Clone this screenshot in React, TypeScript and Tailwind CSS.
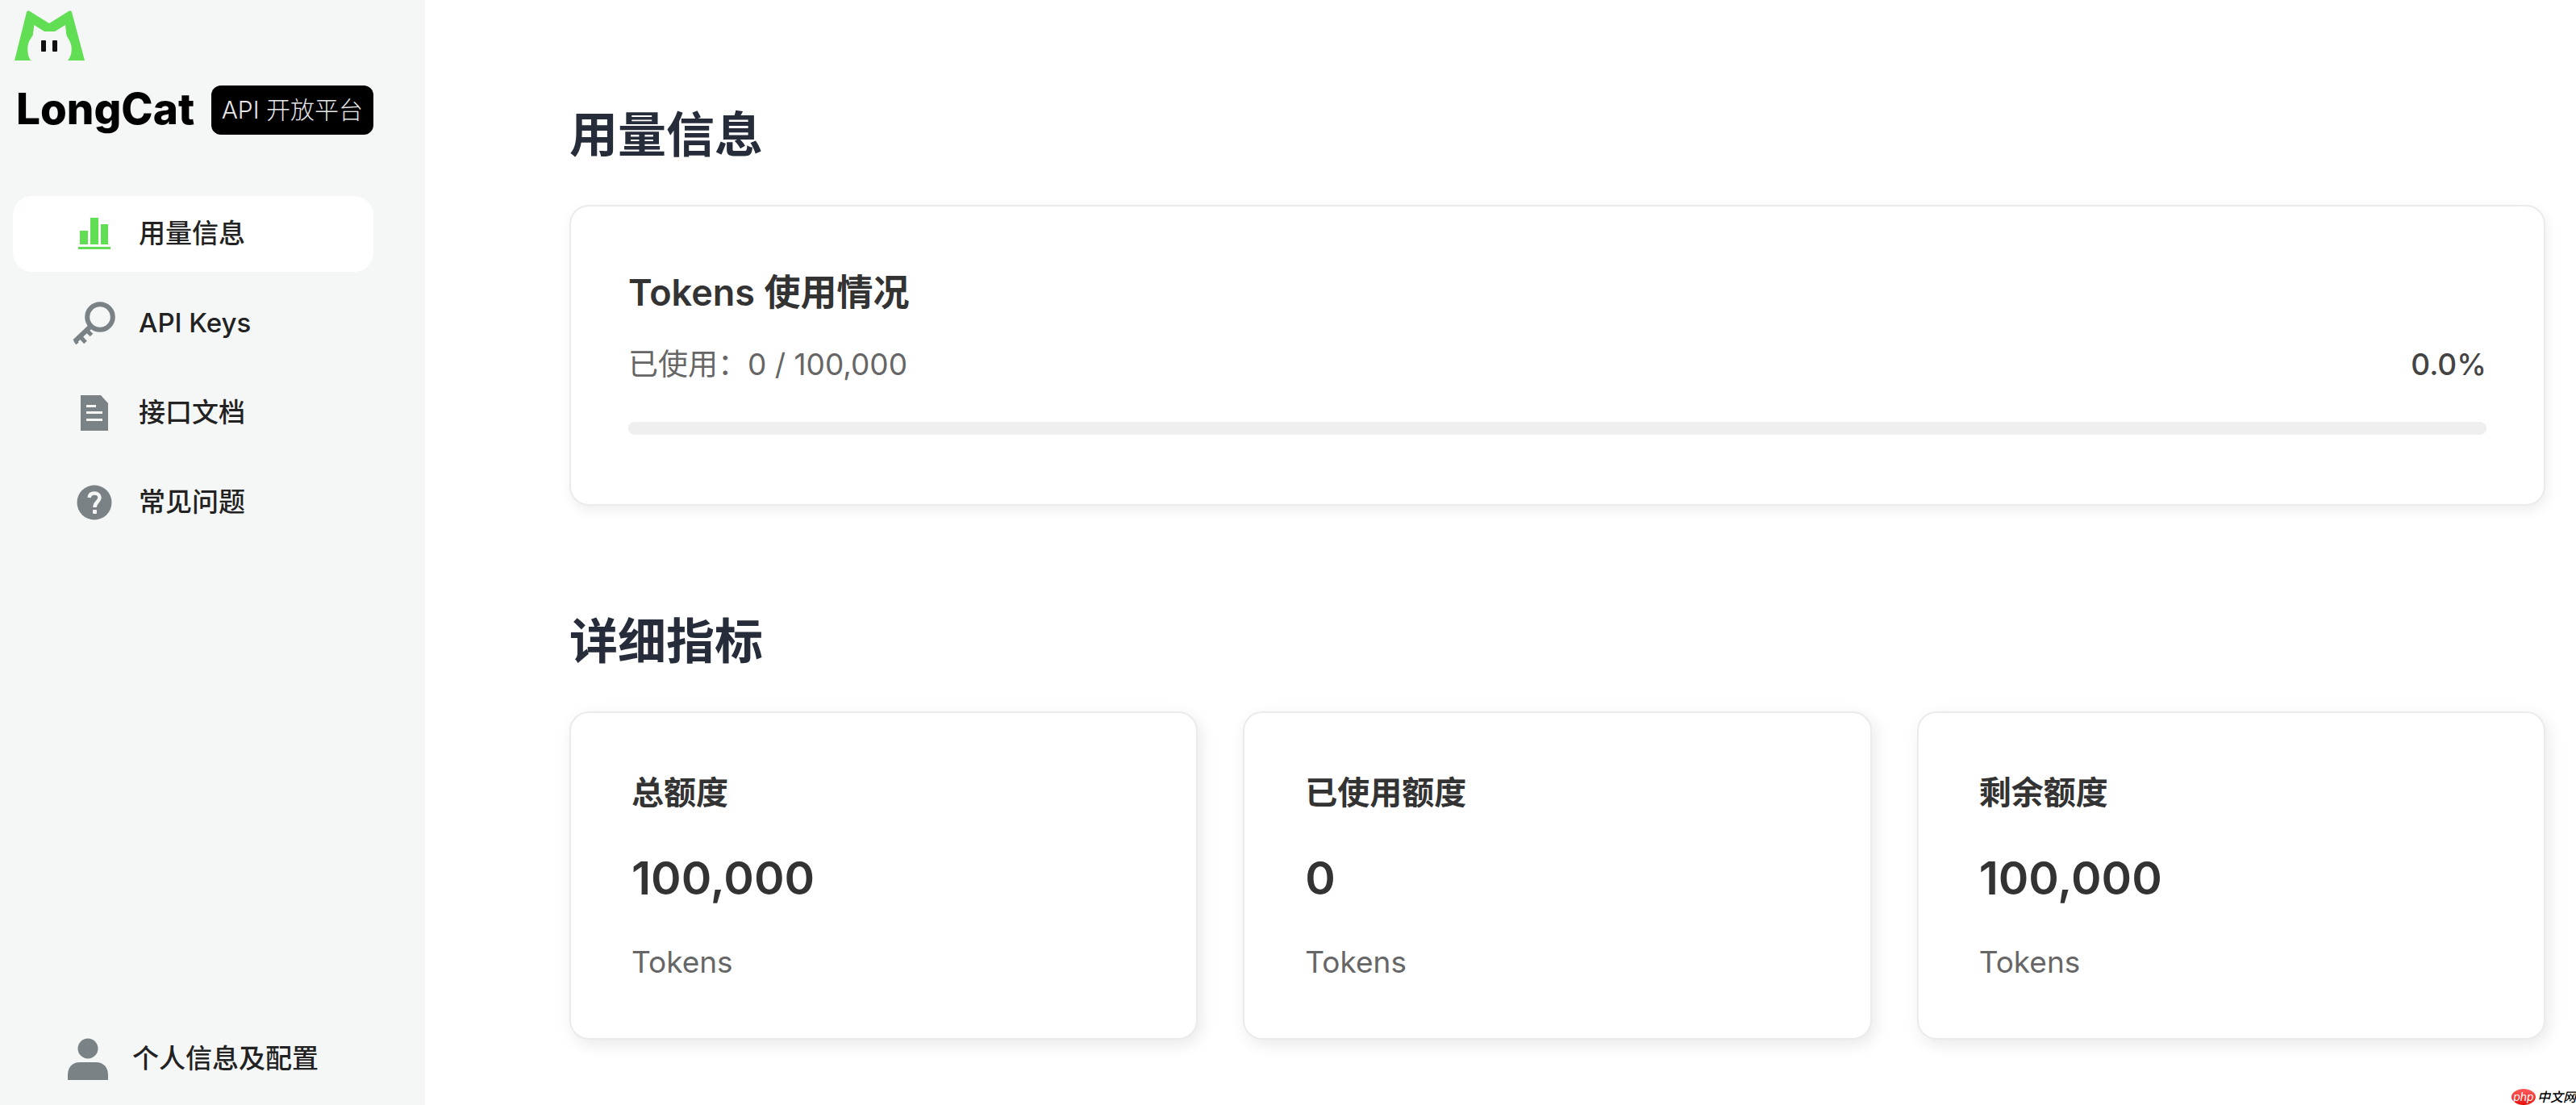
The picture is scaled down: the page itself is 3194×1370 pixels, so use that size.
import React from 'react';

interface NavItem {
  id: string;
  label: string;
  icon: React.ReactNode;
  active?: boolean;
}

interface Metric {
  id: string;
  label: string;
  value: number;
}

const UsageIcon = () => (
  <svg width="40" height="42" viewBox="0 0 40 42" fill="currentColor" aria-hidden="true">
    <rect x="2" y="17" width="10" height="17" />
    <rect x="15" y="1" width="10" height="33" />
    <rect x="28" y="9" width="9" height="25" />
    <rect x="0" y="37" width="40" height="3" />
  </svg>
);

const KeyIcon = () => (
  <svg width="54" height="54" viewBox="0 0 54 54" fill="none" stroke="currentColor" aria-hidden="true">
    <circle cx="34" cy="19" r="15.8" strokeWidth="6" />
    <path d="M22 31 L2.500 49.500" strokeWidth="6" />
    <path d="M17 35 L23.500 41.500 M10 44 L16 50.500" strokeWidth="5" />
    <path d="M3 48 L6 52" strokeWidth="4" />
  </svg>
);

const DocIcon = () => (
  <svg width="36" height="44" viewBox="0 0 36 44" aria-hidden="true">
    <path d="M1 0 H26 L35 10 V44 H1 Z" fill="currentColor" />
    <g fill="#f5f7f7">
      <rect x="8" y="12" width="12" height="3" />
      <rect x="8" y="20" width="20" height="3" />
      <rect x="8" y="29" width="20" height="3" />
    </g>
  </svg>
);

const HelpIcon = () => (
  <svg width="44" height="44" viewBox="0 0 44 44" aria-hidden="true">
    <circle cx="22" cy="22" r="21.5" fill="currentColor" />
    <path
      d="M15.500 16 C16 12 19 10.500 22 10.500 C26 10.500 28.500 13 28.500 16 C28.500 21 22.500 21.500 22.500 28"
      fill="none"
      stroke="#f5f7f7"
      strokeWidth="4.5"
    />
    <rect x="20" y="31" width="5" height="5" rx="1" fill="#f5f7f7" />
  </svg>
);

const UserIcon = () => (
  <svg width="52" height="52" viewBox="0 0 52 52" fill="currentColor" aria-hidden="true">
    <circle cx="26" cy="13" r="12.5" />
    <path d="M1 52 V46 C1 36 7 30 16 30 H36 C45 30 51 36 51 46 V52 Z" />
  </svg>
);

const Logo = () => (
  <svg width="88" height="64" viewBox="0 0 88 64" role="img" aria-label="LongCat">
    <path
      d="M0 63 L15 3 Q16 0 19 2 L43 17 L67 2 Q70 0 71 3 L87 63 H66 C71 57 71 51 70.500 45 C69 38 66 36 64.300 31 L63 19 L50 27 H37 L24.300 19 L22.700 32 C19 37 16.500 41 16.300 48 C16.300 54 17 59 20.300 63 Z"
      fill="#62de54"
    />
    <rect x="33" y="38" width="6" height="14" rx="1" fill="#111" />
    <rect x="47" y="38" width="6" height="14" rx="1" fill="#111" />
  </svg>
);

const navItems: NavItem[] = [
  { id: 'usage', label: '用量信息', icon: <UsageIcon />, active: true },
  { id: 'keys', label: 'API Keys', icon: <KeyIcon /> },
  { id: 'docs', label: '接口文档', icon: <DocIcon /> },
  { id: 'faq', label: '常见问题', icon: <HelpIcon /> },
];

const total = 100000;
const used = 0;

const metrics: Metric[] = [
  { id: 'total', label: '总额度', value: total },
  { id: 'used', label: '已使用额度', value: used },
  { id: 'left', label: '剩余额度', value: total - used },
];

const Sidebar: React.FC = () => (
  <aside className="flex w-[527px] shrink-0 flex-col bg-[#f5f7f7] pr-16 pl-4">
    <div className="pt-3 pl-0.5">
      <Logo />
      <div className="mt-[30px] flex items-center justify-between">
        <span className="pb-1 pl-0.5 text-[53px] leading-[56px] font-extrabold text-black">LongCat</span>
        <span className="rounded-xl bg-black px-[13px] text-[30px] leading-[61px] font-light whitespace-nowrap text-gray-200">
          API 开放平台
        </span>
      </div>
    </div>

    <nav className="mt-[76px] flex flex-col gap-[17px]">
      {navItems.map((item) => (
        <a
          key={item.id}
          href={`#${item.id}`}
          className={`flex h-[94px] items-center gap-[27px] rounded-3xl pl-[73px] text-[33px] font-medium text-[#222] ${
            item.active ? 'bg-white' : ''
          }`}
        >
          <span className={`flex w-14 justify-center ${item.active ? 'text-[#62de54]' : 'text-[#7a8285]'}`}>
            {item.icon}
          </span>
          {item.label}
        </a>
      ))}
    </nav>

    <a
      href="#profile"
      className="mt-auto mb-2.5 flex h-[94px] items-center gap-[27px] pl-[65px] text-[33px] font-medium text-[#222]"
    >
      <span className="flex w-14 justify-center text-[#7a8285]">
        <UserIcon />
      </span>
      个人信息及配置
    </a>
  </aside>
);

const App: React.FC = () => {
  const percent = (used / total) * 100;

  return (
    <div className="relative flex min-h-screen bg-white font-['Inter','Noto_Sans_CJK_SC',sans-serif]">
      <Sidebar />

      <main className="min-w-0 flex-1 overflow-x-clip pt-[137px] pr-[38px] pl-[179px]">
        <section id="usage">
          <h2 className="text-[60px] leading-[60px] font-semibold text-[#262c3a]">用量信息</h2>
          <div className="mt-[57px] rounded-3xl border-2 border-[#ebebeb] bg-white px-[71px] pt-[77px] pb-[86px] shadow-[2px_6px_16px_rgba(0,0,0,0.07)]">
            <h3 className="text-[45px] leading-[60px] font-semibold text-[#333]">Tokens 使用情况</h3>
            <div className="mt-[35px] flex items-center justify-between text-[37px] leading-[48px]">
              <span className="text-[#666]">
                已使用：{used.toLocaleString('en-US')} / {total.toLocaleString('en-US')}
              </span>
              <span className="font-medium text-[#444]">{percent.toFixed(1)}%</span>
            </div>
            <div className="mt-[47px] h-4 overflow-hidden rounded-full bg-[#efefef]">
              <div className="h-full rounded-full bg-[#62de54]" style={{ width: `${percent}%` }} />
            </div>
          </div>
        </section>

        <section id="metrics" className="mt-[138px]">
          <h2 className="text-[60px] leading-[60px] font-semibold text-[#262c3a]">详细指标</h2>
          <div className="mt-[57px] grid grid-cols-3 gap-14">
            {metrics.map((metric) => (
              <div
                key={metric.id}
                className="rounded-3xl border-2 border-[#ebebeb] bg-white px-[75px] pt-[75px] pb-[70px] shadow-[4px_6px_20px_rgba(0,0,0,0.09)]"
              >
                <h3 className="text-[40px] leading-[48px] font-semibold text-[#333]">{metric.label}</h3>
                <p className="mt-[46px] text-[57px] leading-[72px] font-semibold text-[#333]">
                  {metric.value.toLocaleString('en-US')}
                </p>
                <p className="mt-[44px] text-[37px] leading-[48px] text-[#666]">Tokens</p>
              </div>
            ))}
          </div>
        </section>
      </main>

      {/* site badge in the corner */}
      <div className="absolute right-0 bottom-0 flex items-center gap-0.5 text-black italic">
        <span className="flex h-5 w-[30px] items-center justify-center rounded-[50%] bg-linear-to-b from-[#ff5a5a] to-[#e60000] text-sm leading-none text-white">
          php
        </span>
        <span className="text-base leading-5 font-medium">中文网</span>
      </div>
    </div>
  );
};

export default App;
